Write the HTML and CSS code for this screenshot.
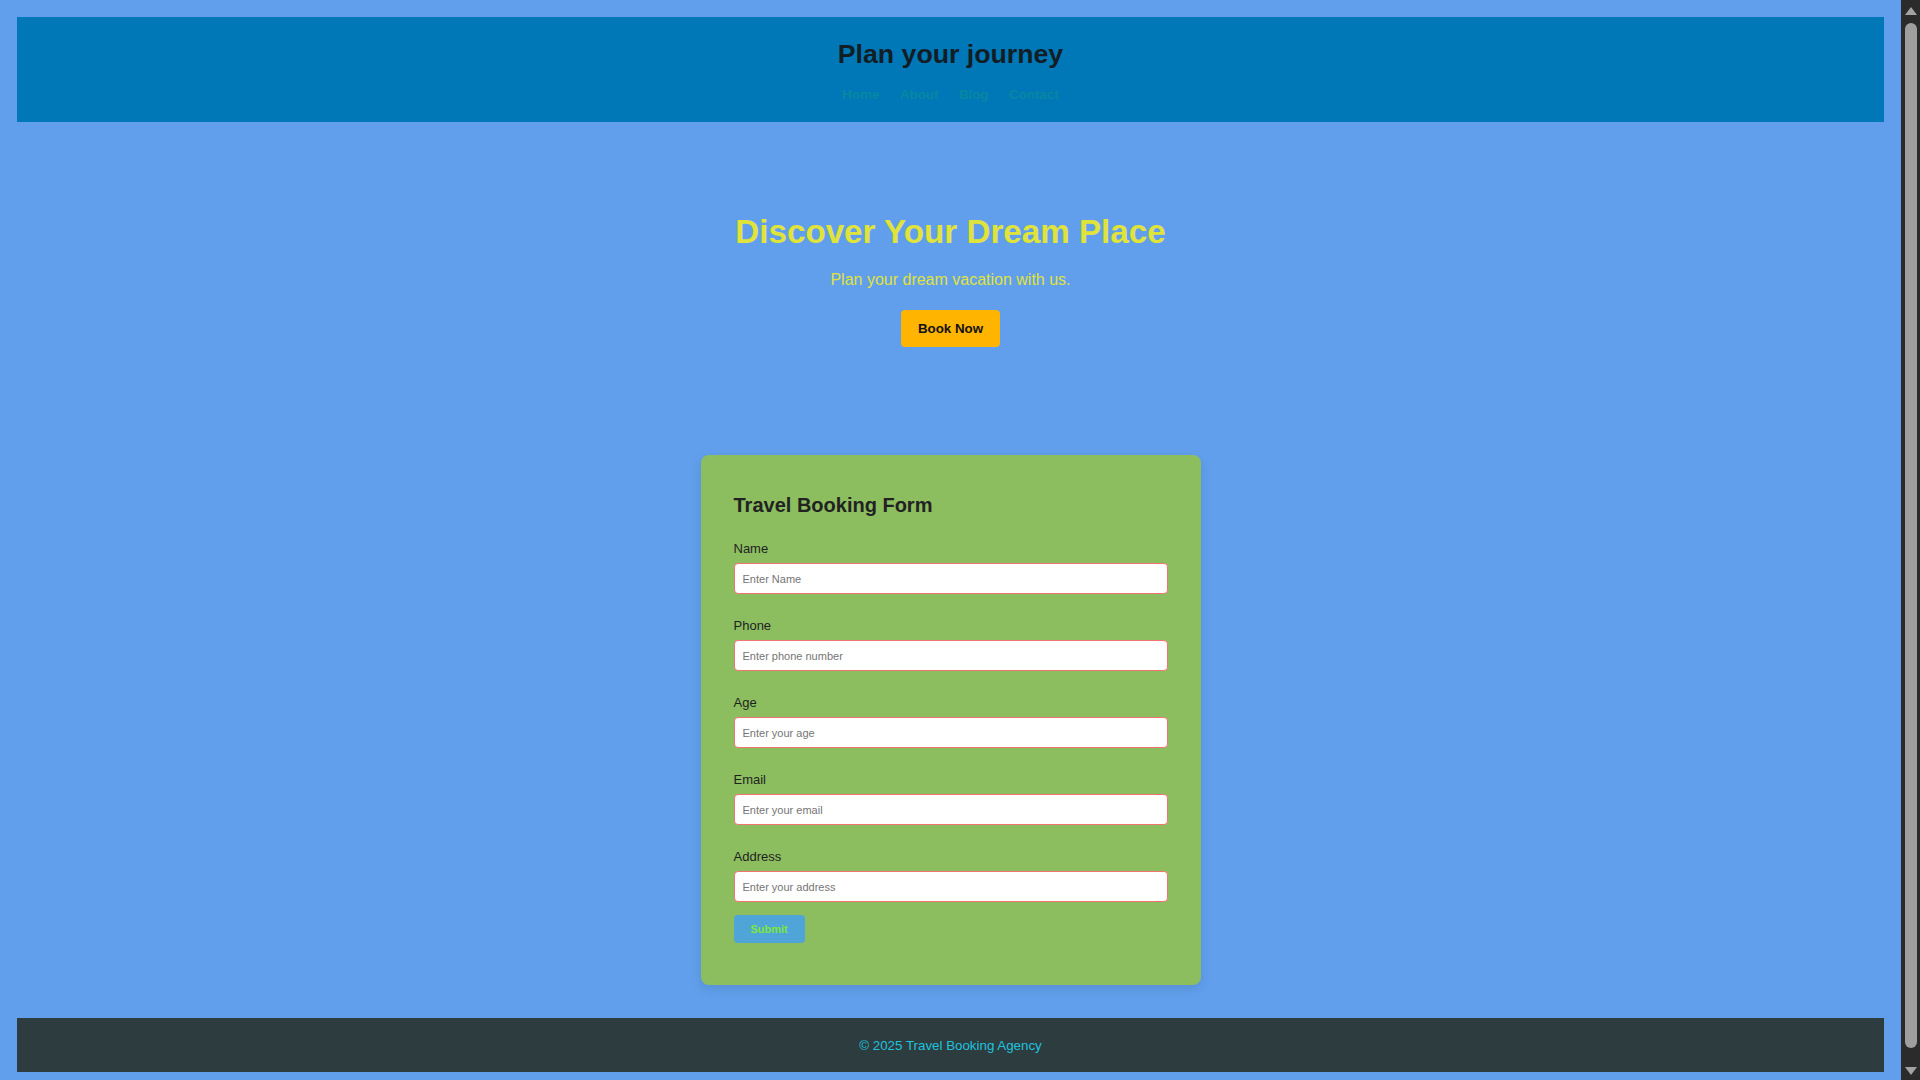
FILE: index.html
```html
<!DOCTYPE html>
<html lang="en">
<head>
<meta charset="UTF-8">
<title>Travel Booking Agency</title>
<link rel="stylesheet" href="styles.css">
</head>
<body>
<header class="site-header">
  <h1 class="site-title">Plan your journey</h1>
  <nav class="site-nav">
    <a href="#">Home</a>
    <a href="#">About</a>
    <a href="#">Blog</a>
    <a href="#">Contact</a>
  </nav>
</header>

<section class="hero">
  <h2 class="hero-title">Discover Your Dream Place</h2>
  <p class="hero-text">Plan your dream vacation with us.</p>
  <button class="hero-btn" type="button">Book Now</button>
</section>

<section class="booking-card">
  <h3 class="booking-title">Travel Booking Form</h3>
  <form class="booking-form">
    <div class="field">
      <label for="name">Name</label>
      <input id="name" type="text" placeholder="Enter Name">
    </div>
    <div class="field">
      <label for="phone">Phone</label>
      <input id="phone" type="text" placeholder="Enter phone number">
    </div>
    <div class="field">
      <label for="age">Age</label>
      <input id="age" type="text" placeholder="Enter your age">
    </div>
    <div class="field">
      <label for="email">Email</label>
      <input id="email" type="text" placeholder="Enter your email">
    </div>
    <div class="field">
      <label for="address">Address</label>
      <input id="address" type="text" placeholder="Enter your address">
    </div>
    <button class="submit-btn" type="button">Submit</button>
  </form>
</section>

<footer class="site-footer">© 2025 Travel Booking Agency</footer>

<div class="scrollbar" aria-hidden="true">
  <span class="scrollbar-up"></span>
  <span class="scrollbar-thumb"></span>
  <span class="scrollbar-down"></span>
</div>
</body>
</html>
```

FILE: styles.css
```css
html {
  background: #619fec;
}

body {
  margin: 17px 36px 17px 17px;
  background: #619fec;
  font-family: "Liberation Sans", Arial, sans-serif;
}

/* window scrollbar (overlay on the right edge) */
.scrollbar {
  position: fixed;
  top: 0;
  right: 0;
  box-sizing: border-box;
  width: 19px;
  height: 100%;
  padding: 7px 0 5px;
  display: flex;
  flex-direction: column;
  align-items: center;
  background: #2b2b2b;
}

.scrollbar-up {
  width: 0;
  height: 0;
  border-left: 6px solid transparent;
  border-right: 6px solid transparent;
  border-bottom: 8px solid #a3a3a3;
}

.scrollbar-thumb {
  flex: 1;
  width: 12px;
  margin: 8px 0 19px;
  border-radius: 6px;
  background: #9f9f9f;
}

.scrollbar-down {
  width: 0;
  height: 0;
  border-left: 6px solid transparent;
  border-right: 6px solid transparent;
  border-top: 8px solid #a3a3a3;
}

/* header */
.site-header {
  background: #0077b6;
  padding: 22px 0 20px;
  text-align: center;
}

.site-title {
  margin: 0 0 17px;
  font-size: 26.7px;
  font-weight: bold;
  color: #121e26;
}

.site-nav {
  display: flex;
  justify-content: center;
  gap: 20.5px;
}

.site-nav a {
  font-size: 13.33px;
  font-weight: bold;
  color: #0787a3;
  text-decoration: none;
}

/* hero */
.hero {
  display: flex;
  flex-direction: column;
  align-items: center;
  padding: 91px 0 108px;
  text-align: center;
}

.hero-title {
  margin: 0 0 20px;
  font-size: 33.2px;
  font-weight: bold;
  color: #e0e33a;
}

.hero-text {
  margin: 0 0 21px;
  font-size: 16px;
  color: #e0e33a;
}

.hero-btn {
  height: 37px;
  padding: 0 16.5px;
  border: none;
  border-radius: 4px;
  background: #ffb400;
  color: #111;
  font-family: "Liberation Sans", Arial, sans-serif;
  font-size: 13.33px;
  font-weight: bold;
}

/* booking card */
.booking-card {
  box-sizing: border-box;
  width: 500px;
  margin: 0 auto;
  padding: 39px 33px 42px;
  border-radius: 8px;
  background: #8cbe60;
  box-shadow: 0 4px 12px rgba(0, 0, 0, 0.1);
}

.booking-title {
  margin: 0 0 24px;
  font-size: 20px;
  font-weight: bold;
  color: #222;
}

.booking-form {
  margin: 0;
}

.field {
  margin-bottom: 24px;
}

.field:last-of-type {
  margin-bottom: 13px;
}

.field label {
  display: block;
  margin-bottom: 7px;
  font-size: 13px;
  color: #1f1f1f;
}

.field input {
  display: block;
  box-sizing: border-box;
  width: 100%;
  height: 31px;
  padding: 0 8px;
  border: 1px solid #f27373;
  border-radius: 4px;
  background: #fff;
  font-family: "Liberation Sans", Arial, sans-serif;
  font-size: 11px;
  color: #222;
}

.field input::placeholder {
  color: #757575;
}

.submit-btn {
  display: block;
  padding: 8px 17px;
  border: none;
  border-radius: 4px;
  background: #4fa4d8;
  color: #7ee83a;
  font-family: "Liberation Sans", Arial, sans-serif;
  font-size: 11px;
  font-weight: bold;
}

/* footer */
.site-footer {
  margin-top: 33px;
  padding: 19.5px 0;
  background: #2d3c3e;
  color: #1fc3de;
  font-size: 13.33px;
  text-align: center;
}
```
